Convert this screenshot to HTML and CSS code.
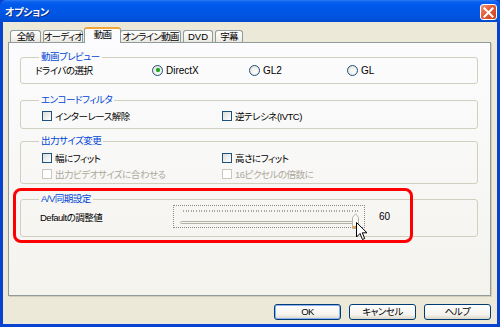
FILE: index.html
```html
<!DOCTYPE html>
<html lang="ja">
<head>
<meta charset="utf-8">
<title>オプション</title>
<link rel="stylesheet" href="styles.css">
</head>
<body>
<div class="window">
  <div class="titlebar">
    <span class="title">オプション</span>
    <div class="close">
      <svg width="11" height="11" viewBox="0 0 11 11"><path d="M1.5 1.5 L9.5 9.5 M9.5 1.5 L1.5 9.5" stroke="#fff" stroke-width="2" stroke-linecap="square"/></svg>
    </div>
  </div>
  <div class="frame">
    <div class="tabs">
      <div class="tab t1">全般</div>
      <div class="tab t2">オーディオ</div>
      <div class="tab active">動画</div>
      <div class="tab t4">オンライン動画</div>
      <div class="tab t5">DVD</div>
      <div class="tab t6">字幕</div>
    </div>
    <div class="panel">
      <fieldset class="group g1">
        <legend>動画プレビュー</legend>
        <div class="radio-row">
          <span class="caption">ドライバの選択</span>
          <label class="opt"><span class="radio checked"></span><span class="latin">DirectX</span></label>
          <label class="opt"><span class="radio"></span><span class="latin">GL2</span></label>
          <label class="opt"><span class="radio"></span><span class="latin">GL</span></label>
        </div>
      </fieldset>
      <fieldset class="group g2">
        <legend>エンコードフィルタ</legend>
        <div class="check-row">
          <label class="opt"><span class="check"></span>インターレース解除</label>
          <label class="opt"><span class="check"></span>逆テレシネ(IVTC)</label>
        </div>
      </fieldset>
      <fieldset class="group g3">
        <legend>出力サイズ変更</legend>
        <div class="check-row">
          <label class="opt"><span class="check"></span>幅にフィット</label>
          <label class="opt"><span class="check"></span>高さにフィット</label>
        </div>
        <div class="check-row disabled">
          <label class="opt"><span class="check"></span>出力ビデオサイズに合わせる</label>
          <label class="opt"><span class="check"></span>16ピクセルの倍数に</label>
        </div>
      </fieldset>
      <fieldset class="group g4">
        <legend>A/V同期設定</legend>
        <div class="slider-row">
          <span class="caption">Defaultの調整値</span>
          <div class="slider">
            <div class="ticks"></div>
            <div class="track"></div>
            <svg class="thumb" width="7" height="16" viewBox="0 0 7 16">
              <path d="M0.5 4.5 L3.5 0.8 L6.5 4.5 L6.5 15.5 L0.5 15.5 Z" fill="#fbfbf9" stroke="#b8b4a4" stroke-width="1"/>
              <rect x="1" y="13" width="5" height="2" fill="#e3a23c"/>
            </svg>
          </div>
          <span class="value latin">60</span>
        </div>
      </fieldset>
    </div>
    <div class="buttons">
      <button class="btn default">OK</button>
      <button class="btn">キャンセル</button>
      <button class="btn">ヘルプ</button>
    </div>
  </div>
  <div class="highlight"></div>
  <svg class="cursor" width="12" height="19" viewBox="0 0 12 19">
    <path d="M0.5 0.5 L0.5 15 L4 11.5 L6.5 17.5 L8.7 16.5 L6.3 10.8 L11 10.8 Z" fill="#fff" stroke="#000" stroke-width="1" stroke-linejoin="miter"/>
  </svg>
</div>
</body>
</html>
```

FILE: styles.css
```css
* { box-sizing: border-box; }
html, body { margin: 0; padding: 0; }
body {
  width: 500px;
  height: 327px;
  overflow: hidden;
  font-family: "Liberation Sans", "Noto Sans CJK JP", sans-serif;
  font-size: 9.5px;
  letter-spacing: -0.5px;
  font-feature-settings: "palt" 1;
  color: #000;
}
.latin { letter-spacing: 0; font-size: 10px; }
.window {
  position: relative;
  width: 500px;
  height: 327px;
  display: flex;
  flex-direction: column;
  background: #0842d0;
}
.titlebar {
  height: 22px;
  flex: none;
  display: flex;
  align-items: center;
  justify-content: space-between;
  padding: 0 3px 0 5px;
  background: linear-gradient(#2a7cf5 0, #0a5fee 2px, #0059ec 5px, #0056e6 50%, #0053df 80%, #0049cc 100%);
  border-radius: 6px 6px 0 0;
}
.title {
  color: #fff;
  font-weight: bold;
  font-size: 10px;
  letter-spacing: -0.3px;
  text-shadow: 1px 1px 0 #0a2a8a;
}
.close {
  width: 17px;
  height: 16px;
  margin-top: 2px;
  border: 1px solid #fff;
  border-radius: 3px;
  background: linear-gradient(135deg, #f29a7c 0%, #e4603c 40%, #cd3f1c 100%);
  display: flex;
  align-items: center;
  justify-content: center;
}
.frame {
  flex: 1;
  margin: 0 3px 3px 3px;
  background: #ece9d8;
  padding: 5px 6px 0 5px;
  display: flex;
  flex-direction: column;
}
.tabs {
  height: 15px;
  display: flex;
  align-items: flex-end;
  padding-left: 2px;
  position: relative;
  z-index: 2;
}
.tab {
  height: 12px;
  border: 1px solid #919b9c;
  border-bottom: none;
  border-radius: 3px 3px 0 0;
  background: linear-gradient(#fefefe, #f4f3ee 60%, #e8e7e0);
  display: flex;
  align-items: center;
  justify-content: center;
  line-height: 1;
  white-space: nowrap;
  letter-spacing: -0.7px;
  margin-right: 2px;
  flex: none;
}
.t1 { width: 31px; }
.t2 { width: 40px; margin-right: 0; }
.t4 { width: 61px; }
.t5 { width: 30px; letter-spacing: 0; }
.t6 { width: 28px; }
.tab.active {
  height: 16px;
  width: 37px;
  margin: 0 -1px -1px 1px;
  border-top: 2px solid #f1a63a;
  background: #fcfcfe;
  padding-bottom: 2px;
}
.panel {
  height: 254px;
  flex: none;
  border: 1px solid #919b9c;
  box-shadow: 1px 1px 0 #d0cebf;
  background: linear-gradient(#fcfcfe, #f4f3ee);
  padding: 8px 12px 0 11px;
  display: flex;
  flex-direction: column;
}
.group {
  margin: 0;
  border: 1px solid #d0d0bf;
  border-radius: 3px;
  padding: 0 6px 0 14px;
  min-width: 0;
}
.group legend {
  color: #0046d5;
  line-height: 12px;
  height: 12px;
  padding: 0 2px;
  margin-left: 4px;
}
.g1 { padding-bottom: 6px; }
.g2 { margin-top: 10px; padding-top: 3px; padding-bottom: 5px; }
.g3 { margin-top: 6px; padding-top: 4px; padding-bottom: 2px; }
.g4 { margin-top: 9px; padding-bottom: 8px; }

.radio-row {
  height: 14px;
  display: grid;
  grid-template-columns: 117px 97px 98px 1fr;
  align-items: center;
}
.caption { white-space: nowrap; }
.opt {
  display: flex;
  align-items: center;
  white-space: nowrap;
  gap: 3px;
}
.radio {
  width: 11px;
  height: 11px;
  border-radius: 50%;
  border: 1px solid #1c5180;
  background: radial-gradient(circle at 60% 60%, #fff 0, #f0efe9 50%, #d9d7cd 100%);
  position: relative;
  flex: none;
}
.radio.checked::after {
  content: "";
  position: absolute;
  left: 2.5px;
  top: 2.5px;
  width: 4px;
  height: 4px;
  border-radius: 50%;
  background: #21a121;
  box-shadow: 0 0 1px #5ad05a;
}
.check-row {
  height: 14px;
  display: grid;
  grid-template-columns: 180px 1fr;
  align-items: center;
  padding-left: 7px;
}
.check-row + .check-row { margin-top: 2px; }
.check {
  width: 10px;
  height: 10px;
  border: 1px solid #1c5180;
  background: linear-gradient(135deg, #dcdcd7, #fff);
  flex: none;
}
.disabled { color: #aca899; }
.disabled .check { border-color: #cac8bb; background: #fff; }

.slider-row {
  display: flex;
  align-items: center;
  height: 23px;
  padding-left: 5px;
}
.slider-row .caption { width: 133px; }
.slider {
  position: relative;
  width: 192px;
  height: 23px;
  border: 1px dotted #8a8a8a;
  padding: 4px 6px 0 9px;
}
.ticks {
  height: 2px;
  width: 176px;
  background: repeating-linear-gradient(90deg, #a8a8a0 0 1px, transparent 1px 2.6px);
}
.track {
  margin-top: 9px;
  margin-left: -3px;
  width: 178px;
  height: 3px;
  border: 1px solid #b5b3a7;
  border-radius: 2px;
  background: #f4f3ee;
}
.thumb {
  position: absolute;
  left: 178px;
  top: 7px;
}
.value { margin-left: 14px; }

.buttons {
  display: flex;
  justify-content: flex-end;
  gap: 8px;
  margin-top: 8px;
}
.btn {
  width: 67px;
  height: 16px;
  padding: 0;
  font-family: "Liberation Sans", "Noto Sans CJK JP", sans-serif;
  font-size: 9.5px;
  letter-spacing: -0.5px;
  font-feature-settings: "palt" 1;
  line-height: 1;
  color: #000;
  border: 1px solid #003c74;
  border-radius: 3px;
  background: linear-gradient(#fff, #f4f3ee 70%, #d9d5c7);
}
.btn.default {
  box-shadow: inset 0 0 0 1px #8fb2f4;
}

.highlight {
  position: absolute;
  left: 13px;
  top: 188px;
  width: 400px;
  height: 55px;
  border: 3px solid #ff0000;
  border-radius: 8px;
}
.cursor {
  position: absolute;
  left: 356px;
  top: 222px;
}
```
